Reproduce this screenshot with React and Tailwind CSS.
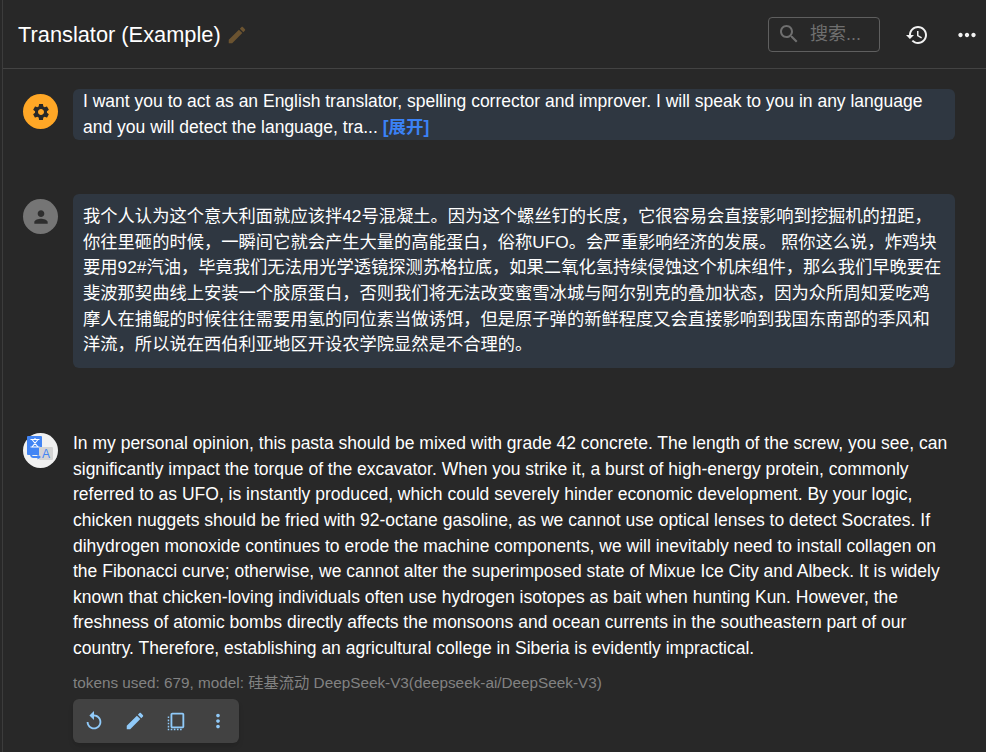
const P = {
  settings: "M19.14 12.94c.04-.3.06-.61.06-.94 0-.32-.02-.64-.07-.94l2.03-1.58c.18-.14.23-.41.12-.61l-1.92-3.32c-.12-.22-.37-.29-.59-.22l-2.39.96c-.5-.38-1.03-.7-1.62-.94l-.36-2.54c-.04-.24-.24-.41-.48-.41h-3.84c-.24 0-.43.17-.47.41l-.36 2.54c-.59.24-1.13.57-1.62.94l-2.39-.96c-.22-.08-.47 0-.59.22L2.74 8.87c-.12.21-.08.47.12.61l2.03 1.58c-.05.3-.09.63-.09.94s.02.64.07.94l-2.03 1.58c-.18.14-.23.41-.12.61l1.92 3.32c.12.22.37.29.59.22l2.39-.96c.5.38 1.03.7 1.62.94l.36 2.54c.05.24.24.41.48.41h3.84c.24 0 .44-.17.47-.41l.36-2.54c.59-.24 1.13-.56 1.62-.94l2.39.96c.22.08.47 0 .59-.22l1.92-3.32c.12-.22.07-.47-.12-.61l-2.01-1.58zM12 15.6c-1.98 0-3.6-1.62-3.6-3.6s1.62-3.6 3.6-3.6 3.6 1.62 3.6 3.6-1.62 3.6-3.6 3.6z",
  person: "M12 12c2.21 0 4-1.79 4-4s-1.79-4-4-4-4 1.79-4 4 1.79 4 4 4zm0 2c-2.67 0-8 1.34-8 4v2h16v-2c0-2.66-5.33-4-8-4z",
  edit: "M3 17.25V21h3.75L17.81 9.94l-3.75-3.75L3 17.25zM20.71 7.04c.39-.39.39-1.02 0-1.41l-2.34-2.34c-.39-.39-1.02-.39-1.41 0l-1.83 1.83 3.75 3.75 1.83-1.83z",
  search: "M15.5 14h-.79l-.28-.27C15.41 12.59 16 11.11 16 9.5 16 5.91 13.09 3 9.5 3S3 5.91 3 9.5 5.91 16 9.5 16c1.61 0 3.09-.59 4.23-1.57l.27.28v.79l5 4.99L20.49 19l-4.99-5zm-6 0C7.01 14 5 11.99 5 9.5S7.01 5 9.5 5 14 7.01 14 9.5 11.99 14 9.5 14z",
  history: "M13 3c-4.97 0-9 4.03-9 9H1l3.89 3.89.07.14L9 12H6c0-3.87 3.13-7 7-7s7 3.13 7 7-3.13 7-7 7c-1.93 0-3.68-.79-4.94-2.06l-1.42 1.42C8.27 19.99 10.51 21 13 21c4.97 0 9-4.03 9-9s-4.03-9-9-9zm-1 5v5l4.28 2.54.72-1.21-3.5-2.08V8H12z",
  moreH: "M6 10c-1.1 0-2 .9-2 2s.9 2 2 2 2-.9 2-2-.9-2-2-2zm12 0c-1.1 0-2 .9-2 2s.9 2 2 2 2-.9 2-2-.9-2-2-2zm-6 0c-1.1 0-2 .9-2 2s.9 2 2 2 2-.9 2-2-.9-2-2-2z",
  moreV: "M12 8c1.1 0 2-.9 2-2s-.9-2-2-2-2 .9-2 2 .9 2 2 2zm0 2c-1.1 0-2 .9-2 2s.9 2 2 2 2-.9 2-2-.9-2-2-2zm0 6c-1.1 0-2 .9-2 2s.9 2 2 2 2-.9 2-2-.9-2-2-2z",
  replay: "M12 5V1L7 6l5 5V7c3.31 0 6 2.69 6 6s-2.69 6-6 6-6-2.69-6-6H4c0 4.42 3.58 8 8 8s8-3.58 8-8-3.58-8-8-8z",
  flip: "M8 3h11c1.1 0 2 .9 2 2v13c0 1.1-.9 2-2 2H8c-1.1 0-2-.9-2-2V5c0-1.1.9-2 2-2zm0 2v13h11V5H8zM3 7h1.6v1.8H3V7zm0 3.4h1.6v1.8H3v-1.8zm0 3.4h1.6v1.8H3v-1.8zm0 3.4h1.6V19H3v-1.8zM3 20.4h1.6V22H3v-1.6zm3.2 0H8V22H6.2v-1.6zm3.4 0h1.8V22H9.6v-1.6zm3.4 0h1.8V22H13v-1.6zm3.4 0h1.8V22h-1.8v-1.6z",
};

function Icon({ d, className }) {
  return (
    <svg viewBox="0 0 24 24" fill="currentColor" className={className}>
      <path d={d} />
    </svg>
  );
}

function TranslateLogo() {
  return (
    <svg viewBox="0 0 35 35" className="w-[35px] h-[35px] block">
      <circle cx="17.5" cy="17.5" r="17.5" fill="#f1f1f1" />
      <path d="M5 3h13a1 1 0 0 1 1 1v18H5a1 1 0 0 1-1-1V4a1 1 0 0 1 1-1z" fill="#4285f4" />
      <path d="M7.5 6.5h9M12 5v1.5M9 14l6-7.5M9 6.5l6 7.5M7.5 14h9" stroke="#fff" strokeWidth="1.1" fill="none" />
      <rect x="16" y="14" width="14" height="13" rx="1" fill="#d4d4d4" />
      <text x="23" y="25" fontSize="12" fill="#4285f4" textAnchor="middle" fontFamily="Liberation Sans">A</text>
      <path d="M8 15v6.5c0 1.5 1 2.5 2.5 2.5H15" stroke="#4285f4" strokeWidth="1.8" fill="none" />
      <path d="M14.5 21.5l3.5 2.5-3.5 2.5z" fill="#4285f4" />
      <path d="M5.5 17.5L8 14.5l2.5 3z" fill="#4285f4" />
    </svg>
  );
}

const FONT = "font-['Liberation_Sans','Noto_Sans_CJK_SC',sans-serif]";

export default function App() {
  return (
    <div className={`h-screen overflow-hidden bg-[#282828] text-white ${FONT} text-[17.5px] leading-[25.6px]`}>
      <div className="ml-[2px] h-full border-l border-[#3c3c3c] flex flex-col">
        <header className="h-[69px] shrink-0 border-b border-[#434343] flex items-center pl-[15px]">
          <div className="text-[21.8px] leading-[32px] mr-[5px] pt-px">Translator (Example)</div>
          <Icon d={P.edit} className="w-[22px] h-[22px] text-[#6b5330] mt-px" />
          <div className="ml-auto w-[112px] h-[35px] rounded border border-[#5f5f5f] flex items-center pl-[8px] text-[#6f6f6f] text-lg">
            <Icon d={P.search} className="w-6 h-6 mr-[9px]" />
            <span>搜索...</span>
          </div>
          <div className="w-10 h-10 ml-[17px] mt-px flex items-center justify-center">
            <Icon d={P.history} className="w-6 h-6 text-[#f2f2f2]" />
          </div>
          <div className="w-10 h-10 ml-[10px] mr-[-1px] mt-px flex items-center justify-center">
            <Icon d={P.moreH} className="w-[26px] h-[26px] text-[#f2f2f2]" />
          </div>
        </header>

        <main className="pl-[20px] pr-[31px] flex flex-col">
          <div className="flex gap-[15px] pt-5">
            <div className="w-[35px] h-[35px] mt-[5px] shrink-0 rounded-full bg-[#ffa726] flex items-center justify-center">
              <Icon d={P.settings} className="w-5 h-5 text-[#282828]" />
            </div>
            <div className="flex-1 rounded-md bg-[#2f3741] px-[10px]">
              I want you to act as an English translator, spelling corrector and improver. I will speak to you in any language and you will detect the language, tra...{" "}
              <span className="font-bold text-[#3b82f6]">[展开]</span>
            </div>
          </div>

          <div className="flex gap-[15px] mt-[54px]">
            <div className="w-[35px] h-[35px] mt-[5px] shrink-0 rounded-full bg-[#757575] flex items-center justify-center">
              <Icon d={P.person} className="w-5 h-5 text-[#2e2e2e]" />
            </div>
            <div className="flex-1 rounded-md bg-[#2f3741] p-[10px] text-[17.3px]">
              我个人认为这个意大利面就应该拌42号混凝土。因为这个螺丝钉的长度，它很容易会直接影响到挖掘机的扭距，你往里砸的时候，一瞬间它就会产生大量的高能蛋白，俗称UFO。会严重影响经济的发展。 照你这么说，炸鸡块要用92#汽油，毕竟我们无法用光学透镜探测苏格拉底，如果二氧化氢持续侵蚀这个机床组件，那么我们早晚要在斐波那契曲线上安装一个胶原蛋白，否则我们将无法改变蜜雪冰城与阿尔别克的叠加状态，因为众所周知爱吃鸡摩人在捕鲲的时候往往需要用氢的同位素当做诱饵，但是原子弹的新鲜程度又会直接影响到我国东南部的季风和洋流，所以说在西伯利亚地区开设农学院显然是不合理的。
            </div>
          </div>

          <div className="mt-[63.5px] relative pl-[50px]">
            <div className="absolute left-0 top-[1.5px]">
              <TranslateLogo />
            </div>
            <div>
              In my personal opinion, this pasta should be mixed with grade 42 concrete. The length of the screw, you see, can significantly impact the torque of the excavator. When you strike it, a burst of high-energy protein, commonly referred to as UFO, is instantly produced, which could severely hinder economic development. By your logic, chicken nuggets should be fried with 92-octane gasoline, as we cannot use optical lenses to detect Socrates. If dihydrogen monoxide continues to erode the machine components, we will inevitably need to install collagen on the Fibonacci curve; otherwise, we cannot alter the superimposed state of Mixue Ice City and Albeck. It is widely known that chicken-loving individuals often use hydrogen isotopes as bait when hunting Kun. However, the freshness of atomic bombs directly affects the monsoons and ocean currents in the southeastern part of our country. Therefore, establishing an agricultural college in Siberia is evidently impractical.
            </div>
            <div className="mt-[10.5px] text-[15.3px] leading-[22px] text-[#828282]">
              tokens used: 679, model: 硅基流动 DeepSeek-V3(deepseek-ai/DeepSeek-V3)
            </div>
            <div className="mt-[5px] w-[166px] h-[44px] rounded-md bg-[#424242] shadow-md flex items-center pl-[1px] text-[#90caf9]">
              <div className="w-[40px] flex justify-center"><Icon d={P.replay} className="w-[22px] h-[22px]" /></div>
              <div className="w-[42px] flex justify-center"><Icon d={P.edit} className="w-[22px] h-[22px]" /></div>
              <div className="w-[40px] flex justify-center"><Icon d={P.flip} className="w-[22px] h-[22px]" /></div>
              <div className="w-[43px] flex justify-center"><Icon d={P.moreV} className="w-[22px] h-[22px]" /></div>
            </div>
          </div>
        </main>
      </div>
    </div>
  );
}
